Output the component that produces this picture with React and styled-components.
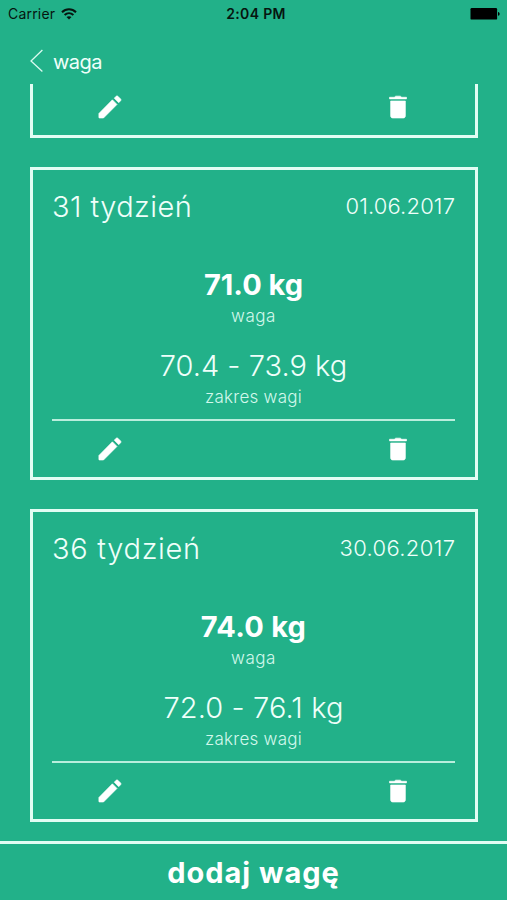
import React from 'react';
import styled, { createGlobalStyle } from 'styled-components';

const GREEN = '#22b189';

const GlobalStyle = createGlobalStyle`
  * { box-sizing: border-box; }
  body { margin: 0; background: ${GREEN}; overflow: hidden; }
`;

const Screen = styled.div`
  width: 507px;
  height: 900px;
  display: flex;
  flex-direction: column;
  overflow: hidden;
  background: ${GREEN};
  color: #effffa;
  font-family: Inter, 'Liberation Sans', sans-serif;
`;

const StatusBar = styled.div`
  flex: none;
  height: 28px;
  padding: 0 7px 0 8px;
  display: grid;
  grid-template-columns: 1fr auto 1fr;
  align-items: center;
  color: #06150f;
  font-size: 14px;
  line-height: 28px;
`;

const Carrier = styled.div`
  display: flex;
  align-items: center;
  gap: 6px;
  letter-spacing: 0.2px;
`;

const Clock = styled.div`
  font-weight: 600;
  letter-spacing: 0.35px;
  padding-left: 4px;
`;

const Battery = styled.svg`
  justify-self: end;
  display: block;
`;

const Header = styled.header`
  flex: none;
  height: 56px;
  padding: 0 0 0 30px;
  display: flex;
  align-items: flex-start;
  gap: 9px;
`;

const BackIcon = styled.svg`
  display: block;
  margin-top: 21px;
`;

const HeaderTitle = styled.div`
  margin-top: 21px;
  font-size: 20px;
  line-height: 26px;
  letter-spacing: -0.5px;
`;

const List = styled.main`
  flex: none;
  height: 757px;
  padding: 0 29px 0 30px;
  display: flex;
  flex-direction: column;
  gap: 29px;
  overflow: hidden;
`;

const Card = styled.section`
  flex: none;
  height: ${(p) => (p.$cut ? 54 : 313)}px;
  border: 3px solid #e2fdf4;
  border-top-width: ${(p) => (p.$cut ? 0 : 3)}px;
  padding: 0 20px 0 19px;
  display: flex;
  flex-direction: column;
`;

const CardHead = styled.div`
  height: 74px;
  padding-top: 18px;
  display: flex;
  justify-content: space-between;
`;

const Week = styled.div`
  font-size: 29px;
  font-weight: 300;
  line-height: 38px;
  letter-spacing: ${(p) => p.$track}px;
`;

const Day = styled.div`
  font-size: 22px;
  font-weight: 300;
  line-height: 37px;
  margin-right: ${(p) => -p.$track}px;
  letter-spacing: ${(p) => p.$track}px;
`;

const Measure = styled.div`
  height: ${(p) => (p.$bold ? 81 : 94)}px;
  padding-top: 22px;
  text-align: center;
`;

const Amount = styled.div`
  color: ${(p) => (p.$bold ? '#ffffff' : 'inherit')};
  font-size: 29px;
  font-weight: ${(p) => (p.$bold ? 700 : 300)};
  line-height: 38px;
  letter-spacing: ${(p) => p.$track}px;
`;

const Caption = styled.div`
  font-size: 17px;
  font-weight: 300;
  line-height: 24px;
  color: #d3f8ec;
  letter-spacing: ${(p) => p.$track}px;
`;

const Actions = styled.div`
  border-top: ${(p) => (p.$cut ? '0' : '2px solid #b9eedd')};
  flex: 1;
  display: grid;
  grid-template-columns: 115px 1fr 115px;
  padding-top: ${(p) => (p.$cut ? 8 : 13)}px;
  justify-items: center;
`;

const ActionIcon = styled.svg`
  display: block;
  grid-column: ${(p) => p.$col};
  fill: #ffffff;
  stroke: #ffffff;
  stroke-width: 0.5;
  stroke-linejoin: round;
`;

const Footer = styled.footer`
  flex: none;
  height: 59px;
  border-top: 3px solid #e2fdf4;
  text-align: center;
  color: #ffffff;
  font-size: 29px;
  font-weight: 700;
  line-height: 57px;
  letter-spacing: 0.95px;
`;

const entries = [
  { week: '31 tydzień', day: '01.06.2017', weight: '71.0 kg', range: '70.4 - 73.9 kg', tracks: [0.45, 0.15, 0, 0.03] },
  { week: '36 tydzień', day: '30.06.2017', weight: '74.0 kg', range: '72.0 - 76.1 kg', tracks: [0.7, 0.35, 0.25, 0.12] },
];

function CardActions({ cut }) {
  return (
    <Actions $cut={cut}>
      <ActionIcon $col={1} width="30" height="30" viewBox="0 0 24 24">
        <path d="M3.1 17.2V20.3a.5.5 0 0 0 .5.5h3.200L17.600 9.950l-3.700-3.700zM20.500 7a1 1 0 0 0 0-1.400l-2.200-2.200a1 1 0 0 0-1.400 0l-1.500 1.500 3.600 3.600z" />
      </ActionIcon>
      <ActionIcon $col={3} width="30" height="30" viewBox="0 0 24 24">
        <path d="M6.100 7.200V19.100c0 1 .7 1.700 1.700 1.700h8.400c1 0 1.700-.7 1.700-1.700V7.200zM5.200 4.200H9l1.200-.9h3.600l1.200.9h3.800v1.300H5.200z" />
      </ActionIcon>
    </Actions>
  );
}

function EntryCard({ entry }) {
  const [weekTrack, dayTrack, weightTrack, rangeTrack] = entry.tracks;
  return (
    <Card>
      <CardHead>
        <Week $track={weekTrack}>{entry.week}</Week>
        <Day $track={dayTrack}>{entry.day}</Day>
      </CardHead>
      <Measure $bold>
        <Amount $bold $track={weightTrack}>{entry.weight}</Amount>
        <Caption $track={0.5}>waga</Caption>
      </Measure>
      <Measure>
        <Amount $track={rangeTrack}>{entry.range}</Amount>
        <Caption $track={0.25}>zakres wagi</Caption>
      </Measure>
      <CardActions />
    </Card>
  );
}

export default function App() {
  return (
    <Screen>
      <GlobalStyle />
      <StatusBar>
        <Carrier>
          Carrier
          <svg width="16" height="12" viewBox="0 0 16 12" fill="none" stroke="#06150f" strokeWidth="2">
            <path d="M1 4.3C5 .3 11 .3 15 4.3" />
            <path d="M3.6 7.1c2.6-2.4 6.2-2.4 8.8 0" />
            <path d="M8 11.6 5.5 9.1c1.5-1.3 3.5-1.3 5 0z" fill="#06150f" stroke="none" />
          </svg>
        </Carrier>
        <Clock>2:04 PM</Clock>
        <Battery width="30" height="12" viewBox="0 0 30 12">
          <rect x="0.5" y="0" width="26.6" height="11.6" rx="1.2" fill="#000" />
          <path d="M28 4c2.2.5 2.2 3.3 0 3.8z" fill="#000" />
        </Battery>
      </StatusBar>
      <Header>
        <BackIcon width="14" height="24" viewBox="0 0 14 24" fill="none" stroke="#d9faef" strokeWidth="1.3">
          <path d="M12.4 1 1 12l11.4 10.6" />
        </BackIcon>
        <HeaderTitle>waga</HeaderTitle>
      </Header>
      <List>
        <Card $cut>
          <CardActions cut />
        </Card>
        {entries.map((entry) => (
          <EntryCard key={entry.week} entry={entry} />
        ))}
      </List>
      <Footer>dodaj wagę</Footer>
    </Screen>
  );
}
